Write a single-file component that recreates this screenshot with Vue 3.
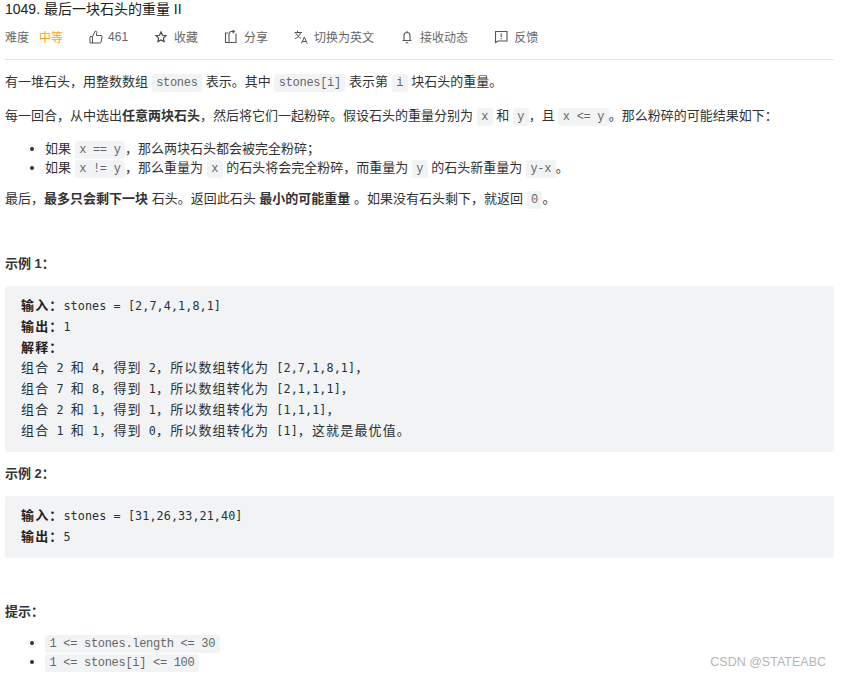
<script setup>
const meta = [
  { key: 'share', label: '分享' },
  { key: 'lang', label: '切换为英文' },
  { key: 'bell', label: '接收动态' },
  { key: 'note', label: '反馈' },
]
</script>

<template>
  <div class="page">
    <h1 class="title">1049. 最后一块石头的重量 II</h1>
    <div class="meta">
      <span class="m m-diff"><span>难度</span><em>中等</em></span>
      <span class="m m-like">
        <svg width="14" height="14" viewBox="0 0 14 14" fill="none" stroke="#555" stroke-width="1"><path d="M1 6.500h2.500v6.500H1zM3.500 6.500 6.300 1c1.200 0 1.700.8 1.500 1.800L7.400 5.500h4.700c.7 0 1.100.6 1 1.200l-1 5.300c-.1.600-.5 1-1.100 1H3.500"/></svg>
        <span>461</span>
      </span>
      <span class="m">
        <svg width="14" height="14" viewBox="0 0 14 14" fill="none" stroke="#444" stroke-width="1.200"><path d="M7 2 8.500 5.300l3.500.4-2.600 2.400.7 3.500L7 9.900l-3.100 1.700.7-3.500L2 5.700l3.500-.4z"/></svg>
        <span>收藏</span>
      </span>
      <span v-for="m in meta" :key="m.key" class="m">
        <svg v-if="m.key === 'share'" width="14" height="14" viewBox="0 0 14 14" fill="none" stroke="#555" stroke-width="1.100"><path d="M4 3H1.500v9.500h10.500V3.500M5 12.500V4.500c0-2 1-3 2.500-3H10M8.700 0 10.500 1.500 8.700 3"/></svg>
        <svg v-else-if="m.key === 'lang'" width="14" height="14" viewBox="0 0 14 14" fill="none" stroke="#555" stroke-width="1"><path d="M0.500 2.500h7.500M3.500 .5v2M6.500 2.500C6 5 4 7.500 1 8.800M2 3.500C3 5.500 5 7.500 7 8.300M7.500 13.500 10.300 7l2.900 6.500M8.400 11.500h3.800"/></svg>
        <svg v-else-if="m.key === 'bell'" width="14" height="14" viewBox="0 0 14 14" fill="none" stroke="#555" stroke-width="1.100"><path d="M4 10V5.500C4 3.800 5.300 2.500 7 2.500S10 3.800 10 5.500V10M2.500 10.500h9M7 1v1.500M5.800 12.700h2.400"/></svg>
        <svg v-else width="14" height="14" viewBox="0 0 14 14" fill="none" stroke="#555" stroke-width="1.100"><path d="M1.500 1.500h11.500v9.500H4l-2.500 1.500zM7.200 3.500v3.500M7.200 8v1.200"/></svg>
        <span>{{ m.label }}</span>
      </span>
    </div>

    <div class="content">
      <p>有一堆石头，用整数数组 <code>stones</code> 表示。其中 <code>stones[i]</code> 表示第 <code>i</code> 块石头的重量。</p>
      <p>每一回合，从中选出<strong>任意两块石头</strong>，然后将它们一起粉碎。假设石头的重量分别为 <code>x</code> 和 <code>y</code>，且 <code>x &lt;= y</code>。那么粉碎的可能结果如下：</p>
      <ul class="rules">
        <li>如果 <code>x == y</code>，那么两块石头都会被完全粉碎；</li>
        <li>如果 <code>x != y</code>，那么重量为 <code>x</code> 的石头将会完全粉碎，而重量为 <code>y</code> 的石头新重量为 <code>y-x</code>。</li>
      </ul>
      <p>最后，<strong>最多只会剩下一块</strong> 石头。返回此石头 <strong>最小的可能重量 </strong>。如果没有石头剩下，就返回 <code>0</code>。</p>

      <p class="label first"><strong>示例 1：</strong></p>
      <pre><strong class="cn">输入：</strong>stones = [2,7,4,1,8,1]
<strong class="cn">输出：</strong>1
<strong class="cn">解释：</strong>
<span class="cn">组合</span> 2 <span class="cn">和</span> 4<span class="cn">，得到</span> 2<span class="cn">，所以数组转化为</span> [2,7,1,8,1]<span class="cn">，</span>
<span class="cn">组合</span> 7 <span class="cn">和</span> 8<span class="cn">，得到</span> 1<span class="cn">，所以数组转化为</span> [2,1,1,1]<span class="cn">，</span>
<span class="cn">组合</span> 2 <span class="cn">和</span> 1<span class="cn">，得到</span> 1<span class="cn">，所以数组转化为</span> [1,1,1]<span class="cn">，</span>
<span class="cn">组合</span> 1 <span class="cn">和</span> 1<span class="cn">，得到</span> 0<span class="cn">，所以数组转化为</span> [1]<span class="cn">，这就是最优值。</span></pre>

      <p class="label tight"><strong>示例 2：</strong></p>
      <pre><strong class="cn">输入：</strong>stones = [31,26,33,21,40]
<strong class="cn">输出：</strong>5</pre>

      <p class="label hint"><strong>提示：</strong></p>
      <ul class="hints">
        <li><code>1 &lt;= stones.length &lt;= 30</code></li>
        <li><code>1 &lt;= stones[i] &lt;= 100</code></li>
      </ul>
    </div>
    <div class="wm">CSDN @STATEABC</div>
  </div>
</template>

<style>
html, body { margin: 0; background: #fff; overflow: hidden; }
</style>

<style scoped>
.page {
  position: relative;
  width: 841px;
  height: 677px;
  overflow: hidden;
  box-sizing: border-box;
  padding: 0 7px 0 5px;
  font-family: "Liberation Sans", "Noto Sans CJK SC", sans-serif;
  font-size: 13px;
  color: #333;
}
.title {
  margin: 0;
  padding-top: 1px;
  font-size: 14px;
  line-height: 17px;
  font-weight: 400;
  color: #212121;
}
.meta {
  display: flex;
  align-items: center;
  height: 37px;
  padding-bottom: 4px;
  border-bottom: 1px solid #e6e6e6;
  font-size: 12px;
  color: #666;
}
.m { display: flex; align-items: center; gap: 6px; margin-right: 26px; }
.m em { font-style: normal; color: #ffa116; margin-left: 4px; }
.m-like { gap: 5px; }
.content { padding-top: 12px; }
.content p { margin: 0 0 13px; line-height: 20.6px; }
code {
  font-family: "Liberation Mono", "DejaVu Sans Mono", monospace;
  font-size: 12px;
  letter-spacing: -0.3px;
  line-height: 1;
  color: #666;
  background: #f2f3f5;
  border-radius: 3px;
  padding: 2px 4.5px;
}
ul { padding: 0 0 0 40px; }
li { line-height: 19px; }
.rules { margin: 0 0 12px; }
.content .label { margin-bottom: 12px; }
.content .label.first { margin-top: 44px; }
.content .label.tight { margin-bottom: 11px; }
.content .label.hint { margin-top: 44px; }
pre {
  margin: 0 0 12px;
  padding: 10px 15px 11px 16px;
  background: #f2f3f5;
  border-radius: 3px;
  font-family: "DejaVu Sans Mono", "Noto Sans CJK SC", monospace;
  font-size: 11.75px;
  letter-spacing: .09px;
  line-height: 20.7px;
  color: #263238;
}
.cn {
  font-family: "Noto Sans CJK SC", sans-serif;
  font-size: 13px;
  letter-spacing: 1.14px;
  line-height: 1;
}
pre strong { color: #212121; }
.hints { margin: -2px 0 0; }
.wm {
  position: absolute;
  right: 15px;
  top: 655px;
  font-size: 12.5px;
  color: #b5b5b5;
}
</style>
